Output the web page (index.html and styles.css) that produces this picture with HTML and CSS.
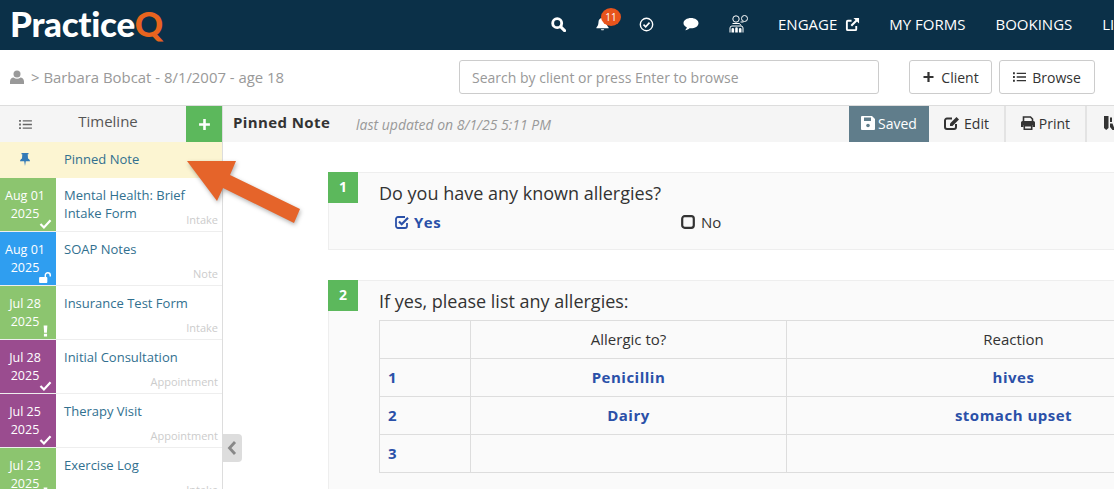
FILE: index.html
```html
<!DOCTYPE html>
<html lang="en">
<head>
    <meta charset="UTF-8">
    <meta name="viewport" content="width=device-width, initial-scale=1.0">
    <title>PracticeQ</title>
    <link rel="stylesheet" href="styles.css">
</head>
<body>
    <header class="topbar">
        <div class="logo">Practice<span class="logo-q">Q</span></div>
        <nav class="topnav">
            <svg class="nav-icon icon-search" viewBox="0 0 16 16"><circle cx="6.600" cy="6.600" r="4.800" fill="none" stroke="#fff" stroke-width="3"/><path d="M10.500 10.500l4 4" stroke="#fff" stroke-width="3.200" stroke-linecap="round"/></svg>
            <span class="bell">
                <svg class="nav-icon icon-bell" viewBox="0 0 16 16"><path d="M8 1.500c-2.800 0-4.300 2-4.300 4.500 0 3.400-1.500 4.600-2.200 5.600v.9h13v-.9c-.7-1-2.200-2.200-2.200-5.600C12.300 3.500 10.800 1.500 8 1.500zM6.200 13.500a1.900 1.900 0 0 0 3.600 0z" fill="#fff"/></svg>
                <span class="badge">11</span>
            </span>
            <svg class="nav-icon icon-check" viewBox="0 0 16 16"><circle cx="8" cy="8" r="6.600" fill="none" stroke="#fff" stroke-width="1.500"/><path d="M4.800 8.200l2.300 2.300L11.200 6" fill="none" stroke="#fff" stroke-width="1.700"/></svg>
            <svg class="nav-icon icon-comment" viewBox="0 0 16 16"><path d="M8 2c4 0 7.500 2.200 7.500 5.200S12 12.300 8 12.300c-.5 0-1 0-1.500-.1C5.500 13.200 4 14 2.200 14.200c.8-.9 1.500-1.800 1.600-3C1.800 10.300.5 8.900.5 7.200.5 4.200 4 2 8 2z" fill="#fff"/></svg>
            <svg class="nav-icon icon-people" viewBox="0 0 20 18"><g fill="none" stroke="#fff" stroke-width="1"><circle cx="7" cy="4" r="3.200"/><circle cx="15.500" cy="3.500" r="3"/><path d="M3.500 8.500h7l1.500 2M11.500 7h3M1 17.500V13a2 2 0 0 1 2-2h9a2 2 0 0 1 2 2v4.500"/></g><path d="M2.500 17.500v-3.200a1.300 1.300 0 0 1 2.600 0v3.200zM6.200 17.500v-4a1.300 1.300 0 0 1 2.600 0v4zM9.900 17.500v-3.200a1.300 1.300 0 0 1 2.600 0v3.200z" fill="#fff"/></svg>
            <a class="nav-link nav-engage">ENGAGE
                <svg class="icon-external" viewBox="0 0 16 16"><path d="M12 9.500V13a1 1 0 0 1-1 1H3a1 1 0 0 1-1-1V5a1 1 0 0 1 1-1h4" fill="none" stroke="#fff" stroke-width="2"/><path d="M9 1h6v6l-2.200-2.200-5.300 5.300-1.600-1.600 5.300-5.300z" fill="#fff"/></svg>
            </a>
            <a class="nav-link">MY FORMS</a>
            <a class="nav-link">BOOKINGS</a>
            <a class="nav-link">LIBRARY</a>
        </nav>
    </header>

    <div class="subbar">
        <div class="crumb">
            <svg class="icon-person" viewBox="0 0 14 14"><circle cx="7" cy="4" r="3.500" fill="#999"/><path d="M0 14v-2.500C0 9 2 7.500 3.500 7.500c1 .8 2.200 1.200 3.500 1.200s2.500-.4 3.500-1.200C12 7.500 14 9 14 11.500V14z" fill="#999"/></svg>
            &gt; Barbara Bobcat - 8/1/2007 - age 18
        </div>
        <input class="search" type="text" placeholder="Search by client or press Enter to browse">
        <button class="btn btn-client">
            <svg class="btn-icon" viewBox="0 0 12 12"><path d="M6 1v10M1 6h10" stroke="#333" stroke-width="2.200"/></svg>
            Client
        </button>
        <button class="btn btn-browse">
            <svg class="btn-icon" viewBox="0 0 14 12"><path d="M4 2h10M4 6h10M4 10h10" stroke="#333" stroke-width="1.400"/><path d="M0 2h2M0 6h2M0 10h2" stroke="#333" stroke-width="2"/></svg>
            Browse
        </button>
    </div>

    <div class="workspace">
        <aside class="sidebar">
            <div class="side-head">
                <svg class="list-icon" viewBox="0 0 14 12"><path d="M4 2h10M4 6h10M4 10h10" stroke="#666" stroke-width="1.400"/><path d="M0 2h2M0 6h2M0 10h2" stroke="#666" stroke-width="2"/></svg>
                <span class="side-title">Timeline</span>
                <span class="side-add"><svg viewBox="0 0 12 12"><path d="M6 1v10M1 6h10" stroke="#fff" stroke-width="2.400"/></svg></span>
            </div>
            <div class="pinned">
                <span class="pin-cell"><svg viewBox="0 0 12 14"><path d="M2.500 1h7v1.200H8.700L9 6.500c1.200.7 2 1.700 2 2.800H6.800L6 14l-.8-4.700H1c0-1.100.8-2.100 2-2.800l.3-4.300H2.500z" fill="#337ab7"/></svg></span>
                <span class="row-title">Pinned Note</span>
            </div>
            <div class="row">
                <div class="date green">Aug 01<br>2025
                    <svg class="status" viewBox="0 0 14 12"><path d="M1.500 6.500l3.800 3.800L12.500 2.500" fill="none" stroke="#fff" stroke-width="2.400"/></svg>
                </div>
                <div class="row-title">Mental Health: Brief Intake Form</div>
                <span class="row-type">Intake</span>
            </div>
            <div class="row">
                <div class="date blue">Aug 01<br>2025
                    <svg class="status" viewBox="0 0 14 12"><path d="M0 6.500a1 1 0 0 1 1-1h7a1 1 0 0 1 1 1V11a1 1 0 0 1-1 1H1a1 1 0 0 1-1-1z" fill="#fff"/><path d="M6.800 6V3.500a2.700 2.700 0 0 1 5.400 0V5" fill="none" stroke="#fff" stroke-width="1.600"/></svg>
                </div>
                <div class="row-title">SOAP Notes</div>
                <span class="row-type">Note</span>
            </div>
            <div class="row">
                <div class="date green">Jul 28<br>2025
                    <svg class="status status-alert" viewBox="0 0 14 12"><path d="M5 0h4l-.5 8H5.500zM5.300 9h3.400v3H5.300z" fill="#fff"/></svg>
                </div>
                <div class="row-title">Insurance Test Form</div>
                <span class="row-type">Intake</span>
            </div>
            <div class="row">
                <div class="date purple">Jul 28<br>2025
                    <svg class="status" viewBox="0 0 14 12"><path d="M1.500 6.500l3.800 3.800L12.500 2.500" fill="none" stroke="#fff" stroke-width="2.400"/></svg>
                </div>
                <div class="row-title">Initial Consultation</div>
                <span class="row-type">Appointment</span>
            </div>
            <div class="row">
                <div class="date purple">Jul 25<br>2025
                    <svg class="status" viewBox="0 0 14 12"><path d="M1.500 6.500l3.800 3.800L12.500 2.500" fill="none" stroke="#fff" stroke-width="2.400"/></svg>
                </div>
                <div class="row-title">Therapy Visit</div>
                <span class="row-type">Appointment</span>
            </div>
            <div class="row">
                <div class="date green">Jul 23<br>2025
                    <svg class="status status-alert" viewBox="0 0 14 12"><path d="M5 0h4l-.5 8H5.500zM5.300 9h3.400v3H5.300z" fill="#fff"/></svg>
                </div>
                <div class="row-title">Exercise Log</div>
                <span class="row-type">Intake</span>
            </div>
            <span class="collapse"><svg viewBox="0 0 10 16"><path d="M8 2L2.500 8 8 14" fill="none" stroke="#888" stroke-width="2.800"/></svg></span>
        </aside>

        <main class="content">
            <div class="doc-bar">
                <span class="doc-title">Pinned Note</span>
                <span class="doc-date">last updated on 8/1/25 5:11 PM</span>
                <div class="doc-tools">
                    <span class="tool tool-saved">
                        <svg viewBox="0 0 14 14"><path d="M1 0h10l3 3v10a1 1 0 0 1-1 1H1a1 1 0 0 1-1-1V1a1 1 0 0 1 1-1z" fill="#fff"/><path d="M3 1.500h7v3.500H3z" fill="#607d8b"/><circle cx="7" cy="9.500" r="1.800" fill="#607d8b"/></svg>
                        Saved
                    </span>
                    <span class="tool tool-edit">
                        <svg viewBox="0 0 16 14"><path d="M8 2.500H3a2 2 0 0 0-2 2V11a2 2 0 0 0 2 2h7a2 2 0 0 0 2-2V8" fill="none" stroke="#333" stroke-width="2"/><path d="M6 7.500L12.500 1l2.500 2.500L8.500 10H6z" fill="#333"/></svg>
                        Edit
                    </span>
                    <span class="tool tool-print">
                        <svg viewBox="0 0 14 14"><path d="M2.500 5V1h7L11.500 3v2" fill="none" stroke="#333" stroke-width="1.600"/><path d="M1.500 5h11A1.500 1.500 0 0 1 14 6.500V11h-2.500V9h-9v2H0V6.500A1.500 1.500 0 0 1 1.500 5z" fill="#333"/><path d="M3.300 9.800h7.400V13.200H3.300z" fill="none" stroke="#333" stroke-width="1.600"/></svg>
                        Print
                    </span>
                    <span class="tool tool-more">
                        <svg viewBox="0 0 14 14"><path d="M0 0h4.500v12L2.200 14 0 12zM6 1.500h2V6H6zM6 7.500h2.500L11 14H8.500L6 11z" fill="#333"/></svg>
                    </span>
                </div>
            </div>

            <section class="card card-first">
                <div class="num">1</div>
                <div class="card-body">
                    <div class="question">Do you have any known allergies?</div>
                    <div class="options">
                        <span class="option option-on">
                            <svg viewBox="0 0 14 14"><path d="M12 8v3a2 2 0 0 1-2 2H3a2 2 0 0 1-2-2V4a2 2 0 0 1 2-2h7" fill="none" stroke="#2a50a8" stroke-width="1.800"/><path d="M4 6.500l2.700 2.700L13 2.800" fill="none" stroke="#2a50a8" stroke-width="2.200"/></svg>
                            Yes
                        </span>
                        <span class="option">
                            <svg viewBox="0 0 14 14"><rect x="1.200" y="1.200" width="11.600" height="11.600" rx="2.500" fill="none" stroke="#333" stroke-width="2.200"/></svg>
                            No
                        </span>
                    </div>
                </div>
            </section>

            <section class="card">
                <div class="num">2</div>
                <div class="card-body">
                    <div class="question">If yes, please list any allergies:</div>
                    <table class="grid">
                        <tr><th class="col-n"></th><th class="col-a">Allergic to?</th><th>Reaction</th></tr>
                        <tr><td class="cell-n">1</td><td>Penicillin</td><td>hives</td></tr>
                        <tr><td class="cell-n">2</td><td>Dairy</td><td>stomach upset</td></tr>
                        <tr><td class="cell-n">3</td><td></td><td></td></tr>
                    </table>
                </div>
            </section>
        </main>

        <svg class="arrow" viewBox="0 0 130 80" width="130" height="80">
            <path d="M7 11H56L50 25 120 59 114 73 43 38 37 51z" fill="#e5642a"/>
        </svg>
    </div>
</body>
</html>
```

FILE: styles.css
```css
* {
    box-sizing: border-box;
}
html, body {
    height: 100%;
}
body {
    margin: 0;
    overflow: hidden;
    font-family: "Open Sans", Arial, sans-serif;
    font-size: 14px;
    color: #333;
    background: #fff;
}

/* top navigation */
.topbar {
    display: flex;
    align-items: center;
    height: 50px;
    overflow: hidden;
    background: #0b3048;
    color: #fff;
}
.logo {
    flex: none;
    width: 551px;
    height: 50px;
    padding-left: 10px;
    font-family: "Lato", "Open Sans", sans-serif;
    font-size: 35px;
    font-weight: 900;
    letter-spacing: -0.3px;
    line-height: 46px;
}
.logo-q {
    color: #e8641f;
}
.topnav {
    display: flex;
    flex: none;
    align-items: center;
    margin-top: -2px;
    white-space: nowrap;
}
.nav-icon {
    display: block;
}
.icon-search {
    width: 15px;
    height: 15px;
    margin-right: 29px;
}
.bell {
    position: relative;
    display: block;
    margin-right: 29px;
}
.icon-bell {
    width: 15px;
    height: 16px;
}
.badge {
    position: absolute;
    top: -8px;
    left: 6px;
    width: 20px;
    height: 18px;
    border-radius: 50%;
    background: #e8541c;
    font-size: 10px;
    line-height: 18px;
    text-align: center;
}
.icon-check {
    width: 15px;
    height: 15px;
    margin-right: 29px;
}
.icon-comment {
    width: 16px;
    height: 16px;
    margin-right: 30px;
}
.icon-people {
    width: 20px;
    height: 18px;
    margin-right: 29px;
}
.nav-link {
    display: flex;
    align-items: center;
    margin-right: 30px;
    font-size: 15px;
}
.nav-engage {
    gap: 8px;
    margin-right: 29px;
}
.icon-external {
    width: 15px;
    height: 15px;
}

/* client bar */
.subbar {
    display: flex;
    align-items: center;
    height: 56px;
    padding: 0 0 1px 10px;
    border-bottom: 1px solid #ddd;
}
.crumb {
    display: flex;
    flex: none;
    align-items: center;
    gap: 7px;
    width: 449px;
    color: #999;
    font-size: 14.9px;
}
.icon-person {
    width: 14px;
    height: 14px;
}
.search {
    flex: none;
    width: 420px;
    height: 34px;
    margin-right: 30px;
    padding: 1px 12px 0;
    border: 1px solid #ccc;
    border-radius: 3px;
    font-family: inherit;
    font-size: 14px;
}
.search::placeholder {
    color: #999;
}
.btn {
    display: flex;
    flex: none;
    align-items: center;
    justify-content: center;
    gap: 6px;
    height: 34px;
    padding: 0;
    border: 1px solid #ccc;
    border-radius: 3px;
    background: #fff;
    color: #333;
    font-family: inherit;
    font-size: 14px;
}
.btn-client {
    width: 83px;
    margin-right: 7px;
}
.btn-browse {
    width: 96px;
}
.btn-icon {
    width: 13px;
    height: 12px;
}

/* timeline */
.workspace {
    position: relative;
    display: flex;
    height: 383px;
}
.sidebar {
    position: relative;
    flex: none;
    width: 223px;
    border-right: 1px solid #ddd;
}
.side-head {
    display: flex;
    align-items: center;
    height: 36px;
    background: #f5f5f5;
}
.list-icon {
    flex: none;
    width: 13px;
    height: 11px;
    margin: 0 0 0 19px;
}
.side-title {
    flex: none;
    width: 152px;
    margin-top: -6px;
    color: #555;
    font-size: 15px;
    text-align: center;
}
.side-add {
    display: flex;
    flex: none;
    align-items: center;
    justify-content: center;
    width: 36px;
    height: 36px;
    margin-left: 2px;
    background: #5cb85c;
}
.side-add svg {
    width: 13px;
    height: 13px;
}
.pinned {
    display: flex;
    align-items: center;
    height: 36px;
    padding-bottom: 3px;
    background: #fcf5d2;
}
.pin-cell {
    display: flex;
    flex: none;
    justify-content: center;
    width: 50px;
    margin-right: 14px;
}
.pin-cell svg {
    width: 12px;
    height: 14px;
}
.row {
    position: relative;
    display: flex;
    height: 54px;
    border-bottom: 1px solid #eee;
}
.date {
    position: relative;
    flex: none;
    width: 56px;
    padding: 9px 6px 0 0;
    color: #fff;
    font-size: 12.5px;
    line-height: 18px;
    text-align: center;
}
.green {
    background: #8cc56f;
}
.blue {
    background: #2f9ef0;
}
.purple {
    background: #9a4c8f;
}
.status {
    position: absolute;
    right: 4px;
    bottom: 2px;
    width: 13px;
    height: 11px;
}
.status-alert {
    height: 12px;
}
.row-title {
    padding-left: 8px;
    color: #31708f;
    font-size: 13px;
    line-height: 18px;
}
.pinned .row-title {
    padding-left: 0;
}
.row > .row-title {
    padding-top: 8px;
    width: 150px;
}
.row-type {
    position: absolute;
    right: 4px;
    bottom: 4px;
    color: #ccc;
    font-size: 11px;
}
.collapse {
    position: absolute;
    top: 328px;
    left: 222px;
    display: flex;
    align-items: center;
    justify-content: center;
    width: 20px;
    height: 28px;
    border-radius: 0 4px 4px 0;
    background: #ddd;
}
.collapse svg {
    width: 10px;
    height: 16px;
}

/* document */
.content {
    flex: 1;
    min-width: 0;
    overflow: hidden;
}
.doc-bar {
    display: flex;
    align-items: center;
    height: 36px;
    padding-left: 10px;
    background: #f5f5f5;
    white-space: nowrap;
}
.doc-title {
    flex: none;
    width: 123px;
    margin-top: -4px;
    font-size: 15px;
    font-weight: 700;
    letter-spacing: 0.4px;
}
.doc-date {
    flex: none;
    width: 493px;
    color: #999;
    font-size: 14px;
    font-style: italic;
}
.doc-tools {
    display: flex;
    flex: none;
    height: 36px;
}
.tool {
    display: flex;
    align-items: center;
    justify-content: center;
    gap: 4px;
    flex: none;
    height: 36px;
    padding-bottom: 2px;
    border-right: 2px solid #e3e3e3;
    font-size: 14px;
}
.tool svg {
    width: 14px;
    height: 14px;
}
.tool-saved {
    width: 80px;
    gap: 3px;
    border-right: 0;
    background: #607d8b;
    color: #fff;
}
.tool-edit {
    width: 77px;
}
.tool-edit svg {
    width: 16px;
}
.tool-print {
    width: 81px;
}
.tool-more {
    width: 40px;
    border-right: 0;
    justify-content: flex-start;
    padding-left: 17px;
}
.card {
    display: flex;
    width: 940px;
    height: 230px;
    margin: 0 0 30px 105px;
    border: 1px solid #eee;
    background: #fafafa;
}
.card-first {
    height: 78px;
    margin-top: 30px;
}
.num {
    flex: none;
    width: 30px;
    height: 31px;
    margin: -1px 0 0 -1px;
    background: #5cb85c;
    color: #fff;
    font-weight: 700;
    font-size: 14px;
    line-height: 29px;
    text-align: center;
}
.card-body {
    flex: 1;
    padding-left: 21px;
}
.question {
    padding-top: 6px;
    font-size: 18px;
    line-height: 28px;
}
.options {
    display: flex;
    padding: 5px 0 0 16px;
}
.option {
    display: flex;
    flex: none;
    align-items: center;
    gap: 6px;
    width: 286px;
    font-size: 15px;
    line-height: 20px;
}
.option svg {
    width: 14px;
    height: 14px;
}
.option-on {
    gap: 5px;
    color: #2a50a8;
    font-weight: 700;
    letter-spacing: 0.5px;
}
.grid {
    width: 862px;
    margin-top: 5px;
    border-collapse: collapse;
    table-layout: fixed;
    font-size: 15px;
}
.grid th,
.grid td {
    height: 38px;
    padding: 0 8px 2px;
    border: 1px solid #ddd;
    text-align: center;
}
.grid th {
    font-weight: 400;
}
.grid td {
    color: #2a50a8;
    font-weight: 700;
    letter-spacing: 0.5px;
}
.grid .cell-n {
    text-align: left;
}
.col-n {
    width: 91px;
}
.col-a {
    width: 316px;
}

/* callout arrow */
.arrow {
    position: absolute;
    top: 44px;
    left: 180px;
    filter: drop-shadow(1px 2px 2px rgba(0,0,0,0.3));
}
```
